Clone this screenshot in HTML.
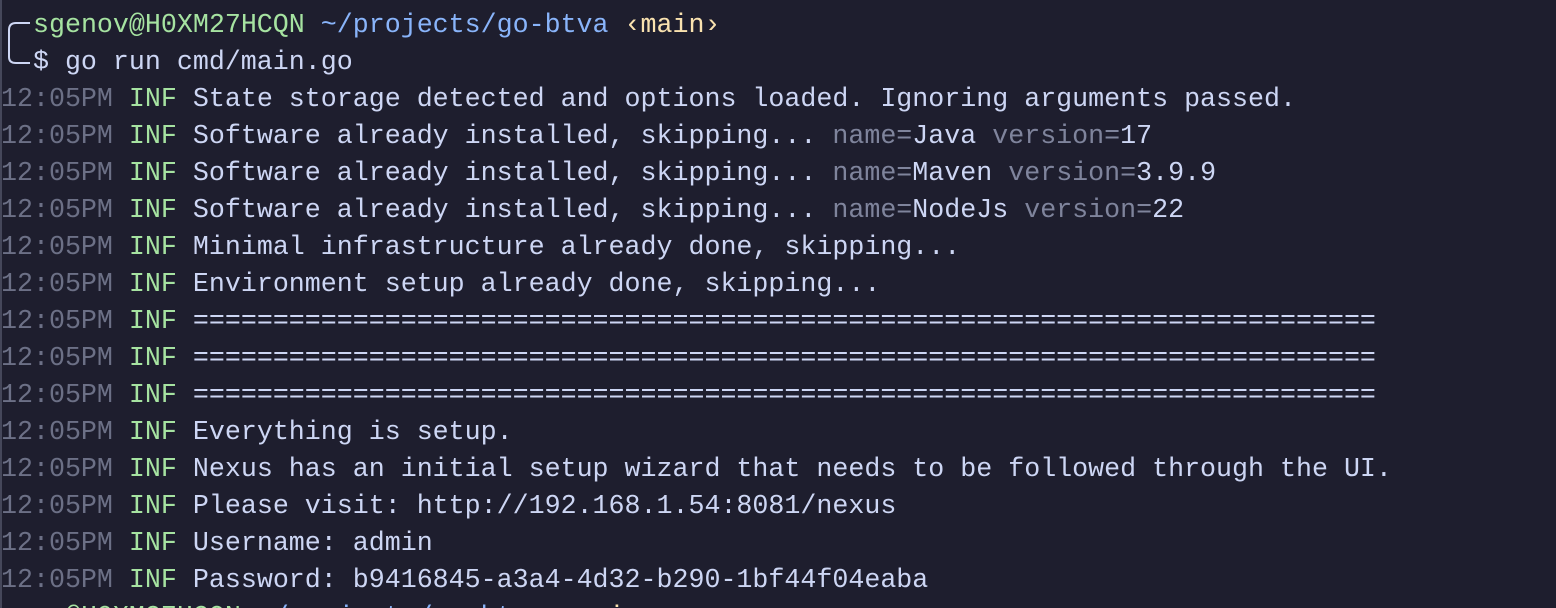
<!DOCTYPE html>
<html><head><meta charset="utf-8"><style>
html,body{margin:0;padding:0;background:#1e1e2e;width:1556px;height:608px;overflow:hidden;position:relative}
#t{position:absolute;left:1px;top:8px;font-family:"Liberation Mono","DejaVu Sans Mono",monospace;font-size:26.65px;line-height:37px;color:#cdd6f4;white-space:pre}
.g{color:#6c7086}.i{color:#a6e3a1}.b{color:#89b4fa}.y{color:#f9e2af}.k{color:#7f849c}
#edge{position:absolute;left:0;top:0;width:2px;height:608px;background:#45475a}
</style></head><body>
<div id="edge"></div>
<svg style="position:absolute;left:0;top:0" width="40" height="80"><path d="M30 23 H16 Q9 23 9 30 V57 Q9 63 16 63 H30" fill="none" stroke="#cdd6f4" stroke-width="2"/></svg>
<div id="t">  <span class="i">sgenov@H0XM27HCQN</span> <span class="b">~/projects/go-btva</span> <span class="y">‹main›</span>
  $ go run cmd/main.go
<span class="g">12:05PM</span> <span class="i">INF</span> State storage detected and options loaded. Ignoring arguments passed.
<span class="g">12:05PM</span> <span class="i">INF</span> Software already installed, skipping... <span class="k">name=</span>Java <span class="k">version=</span>17
<span class="g">12:05PM</span> <span class="i">INF</span> Software already installed, skipping... <span class="k">name=</span>Maven <span class="k">version=</span>3.9.9
<span class="g">12:05PM</span> <span class="i">INF</span> Software already installed, skipping... <span class="k">name=</span>NodeJs <span class="k">version=</span>22
<span class="g">12:05PM</span> <span class="i">INF</span> Minimal infrastructure already done, skipping...
<span class="g">12:05PM</span> <span class="i">INF</span> Environment setup already done, skipping...
<span class="g">12:05PM</span> <span class="i">INF</span> ==========================================================================
<span class="g">12:05PM</span> <span class="i">INF</span> ==========================================================================
<span class="g">12:05PM</span> <span class="i">INF</span> ==========================================================================
<span class="g">12:05PM</span> <span class="i">INF</span> Everything is setup.
<span class="g">12:05PM</span> <span class="i">INF</span> Nexus has an initial setup wizard that needs to be followed through the UI.
<span class="g">12:05PM</span> <span class="i">INF</span> Please visit: http://192.168.1.54:8081/nexus
<span class="g">12:05PM</span> <span class="i">INF</span> Username: admin
<span class="g">12:05PM</span> <span class="i">INF</span> Password: b9416845-a3a4-4d32-b290-1bf44f04eaba
    <span class="i">@H0XM27HCQN</span> <span class="b">~/projects/go-btva</span> <span class="y">‹main›</span></div>
</body></html>
